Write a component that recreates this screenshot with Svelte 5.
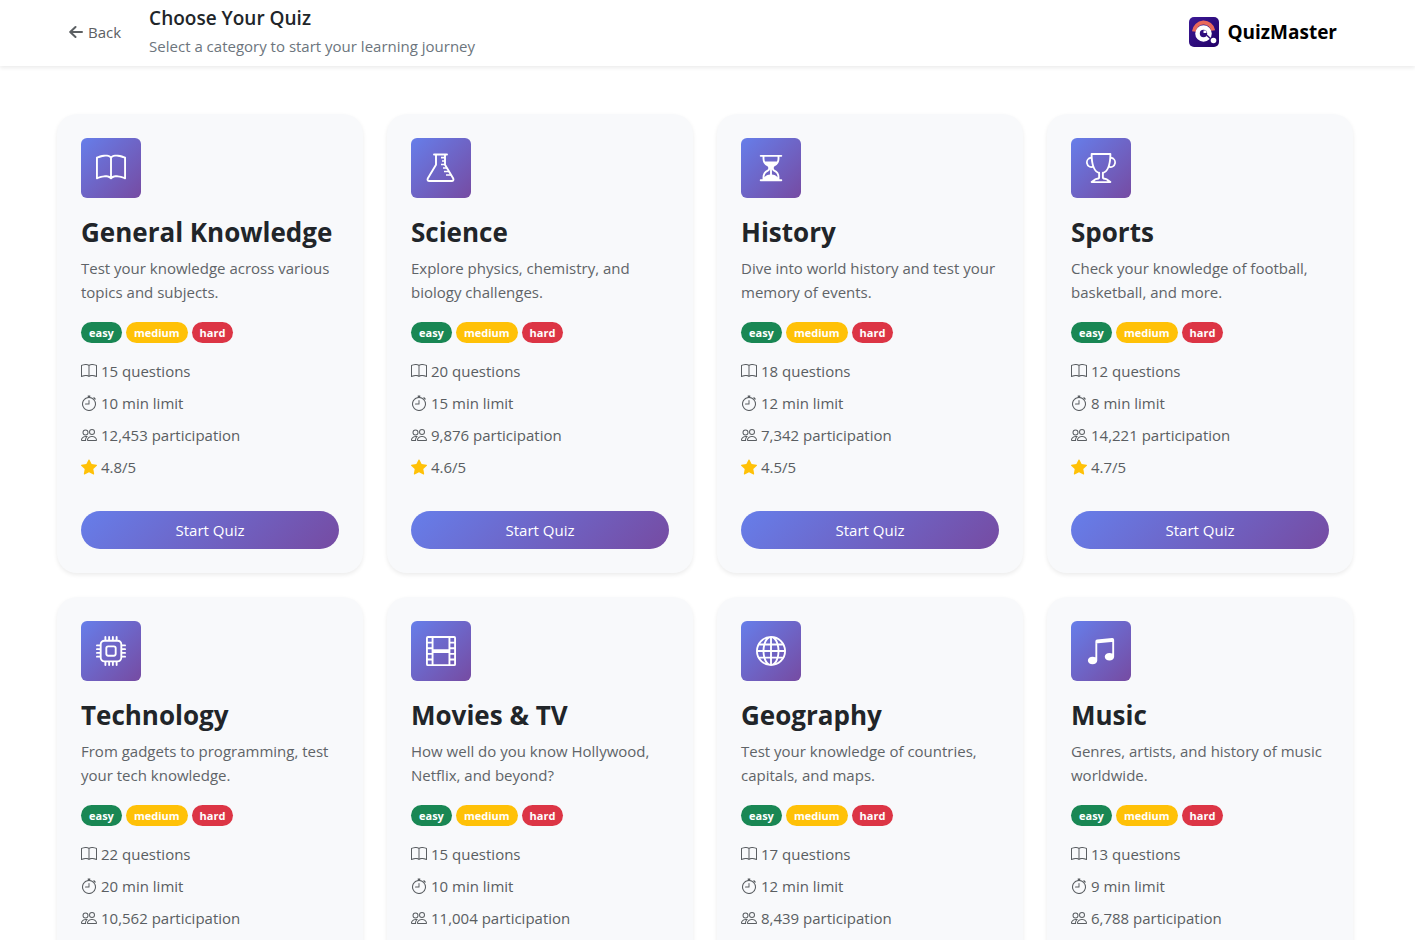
<script>
  const paths = {
    book: 'M1 2.828c.885-.37 2.154-.769 3.388-.893 1.33-.134 2.458.063 3.112.752v9.746c-.935-.53-2.12-.603-3.213-.493-1.18.12-2.37.461-3.287.811zm7.5-.141c.654-.689 1.782-.886 3.112-.752 1.234.124 2.503.523 3.388.893v9.923c-.918-.35-2.107-.692-3.287-.81-1.094-.111-2.278-.039-3.213.492zM8 1.783C7.015.936 5.587.81 4.287.94c-1.514.153-3.042.672-3.994 1.105A.5.5 0 0 0 0 2.5v11a.5.5 0 0 0 .707.455c.882-.4 2.303-.881 3.68-1.02 1.409-.142 2.59.087 3.223.877a.5.5 0 0 0 .78 0c.633-.79 1.814-1.019 3.222-.877 1.378.139 2.8.62 3.681 1.02A.5.5 0 0 0 16 13.5v-11a.5.5 0 0 0-.293-.455c-.952-.433-2.48-.952-3.994-1.105C10.413.809 8.985.936 8 1.783',
    stopwatch: 'M8.5 5.6a.5.5 0 1 0-1 0v2.9h-3a.5.5 0 0 0 0 1H8a.5.5 0 0 0 .5-.5z M6.5 1A.5.5 0 0 1 7 .5h2a.5.5 0 0 1 0 1v.57c1.36.196 2.594.78 3.584 1.64l.012-.013.354-.354-.354-.353a.5.5 0 0 1 .707-.708l1.414 1.415a.5.5 0 1 1-.707.707l-.353-.354-.354.354-.013.012A7 7 0 1 1 7 2.071V1.5a.5.5 0 0 1-.5-.5M8 3a6 6 0 1 0 .001 12A6 6 0 0 0 8 3',
    people: 'M15 14s1 0 1-1-1-4-5-4-5 3-5 4 1 1 1 1zm-7.978-1L7 12.996c.001-.264.167-1.03.76-1.72C8.312 10.629 9.282 10 11 10c1.717 0 2.687.63 3.24 1.276.593.69.758 1.457.76 1.72l-.008.002-.014.002zM11 7a2 2 0 1 0 0-4 2 2 0 0 0 0 4m3-2a3 3 0 1 1-6 0 3 3 0 0 1 6 0M6.936 9.28a6 6 0 0 0-1.23-.247A7 7 0 0 0 5 9c-4 0-5 3-5 4q0 1 1 1h4.216A2.24 2.24 0 0 1 5 13c0-1.01.377-2.042 1.09-2.904.243-.294.526-.569.846-.816M4.92 10A5.5 5.5 0 0 0 4 13H1c0-.26.164-1.03.76-1.724.545-.636 1.492-1.256 3.16-1.275ZM1.5 5.5a3 3 0 1 1 6 0 3 3 0 0 1-6 0m3-2a2 2 0 1 0 0 4 2 2 0 0 0 0-4',
    star: 'M3.612 15.443c-.386.198-.824-.149-.746-.592l.83-4.73L.173 6.765c-.329-.314-.158-.888.283-.95l4.898-.696L7.538.792c.197-.39.73-.39.927 0l2.184 4.327 4.898.696c.441.062.612.636.282.95l-3.522 3.356.83 4.73c.078.443-.36.79-.746.592L8 13.187l-4.389 2.256z',
    hourglass: 'M2.5 15a.5.5 0 1 1 0-1h1v-1a4.5 4.5 0 0 1 2.557-4.06c.29-.139.443-.377.443-.59v-.7c0-.213-.154-.451-.443-.59A4.5 4.5 0 0 1 3.5 3V2h-1a.5.5 0 0 1 0-1h11a.5.5 0 0 1 0 1h-1v1a4.5 4.5 0 0 1-2.557 4.06c-.29.139-.443.377-.443.59v.7c0 .213.154.451.443.59A4.5 4.5 0 0 1 12.5 13v1h1a.5.5 0 0 1 0 1zm2-13v1c0 .537.12 1.045.337 1.5h6.326c.216-.455.337-.963.337-1.5V2zm3 6.35c0 .701-.478 1.236-1.011 1.492A3.5 3.5 0 0 0 4.5 13s.866-1.299 3-1.48zm1 0v3.17c2.134.181 3 1.48 3 1.48a3.5 3.5 0 0 0-1.989-3.158C8.978 9.586 8.5 9.052 8.5 8.351z',
    trophy: 'M2.5.5A.5.5 0 0 1 3 0h10a.5.5 0 0 1 .5.5q0 .807-.034 1.536a3 3 0 1 1-1.133 5.89c-.79 1.865-1.878 2.777-2.833 3.011v2.173l1.425.356c.194.048.377.135.537.255L13.3 15.1a.5.5 0 0 1-.3.9H3a.5.5 0 0 1-.3-.9l1.838-1.379c.16-.12.343-.207.537-.255L6.5 13.11v-2.173c-.955-.234-2.043-1.146-2.833-3.012a3 3 0 1 1-1.132-5.89A33 33 0 0 1 2.5.5m.099 2.54a2 2 0 0 0 .72 3.935c-.333-1.05-.588-2.346-.72-3.935m10.083 3.935a2 2 0 0 0 .72-3.935c-.133 1.59-.388 2.885-.72 3.935M3.504 1q.01.775.056 1.469c.13 2.028.457 3.546.87 4.667C5.294 9.48 6.484 10 7 10a.5.5 0 0 1 .5.5v2.61a1 1 0 0 1-.757.97l-1.426.356a.5.5 0 0 0-.179.085L4.5 15h7l-.638-.479a.5.5 0 0 0-.18-.085l-1.425-.356a1 1 0 0 1-.757-.97V10.5A.5.5 0 0 1 9 10c.516 0 1.706-.52 2.57-2.864.413-1.12.74-2.64.87-4.667q.045-.694.056-1.469z',
    cpu: 'M5 0a.5.5 0 0 1 .5.5V2h1V.5a.5.5 0 0 1 1 0V2h1V.5a.5.5 0 0 1 1 0V2h1V.5a.5.5 0 0 1 1 0V2A2.5 2.5 0 0 1 14 4.5h1.5a.5.5 0 0 1 0 1H14v1h1.5a.5.5 0 0 1 0 1H14v1h1.5a.5.5 0 0 1 0 1H14v1h1.5a.5.5 0 0 1 0 1H14a2.5 2.5 0 0 1-2.5 2.5v1.5a.5.5 0 0 1-1 0V14h-1v1.5a.5.5 0 0 1-1 0V14h-1v1.5a.5.5 0 0 1-1 0V14h-1v1.5a.5.5 0 0 1-1 0V14A2.5 2.5 0 0 1 2 11.5H.5a.5.5 0 0 1 0-1H2v-1H.5a.5.5 0 0 1 0-1H2v-1H.5a.5.5 0 0 1 0-1H2v-1H.5a.5.5 0 0 1 0-1H2A2.5 2.5 0 0 1 4.5 2V.5A.5.5 0 0 1 5 0m-.5 3A1.5 1.5 0 0 0 3 4.5v7A1.5 1.5 0 0 0 4.5 13h7a1.5 1.5 0 0 0 1.5-1.5v-7A1.5 1.5 0 0 0 11.5 3zM5 6.5A1.5 1.5 0 0 1 6.5 5h3A1.5 1.5 0 0 1 11 6.5v3A1.5 1.5 0 0 1 9.5 11h-3A1.5 1.5 0 0 1 5 9.5zM6.5 6a.5.5 0 0 0-.5.5v3a.5.5 0 0 0 .5.5h3a.5.5 0 0 0 .5-.5v-3a.5.5 0 0 0-.5-.5z',
    film: 'M0 1a1 1 0 0 1 1-1h14a1 1 0 0 1 1 1v14a1 1 0 0 1-1 1H1a1 1 0 0 1-1-1zm4 0v6h8V1zm8 8H4v6h8zM1 1v2h2V1zm2 3H1v2h2zM1 7v2h2V7zm2 3H1v2h2zm-2 3v2h2v-2zM15 1h-2v2h2zm-2 3v2h2V4zm2 3h-2v2h2zm-2 3v2h2v-2zm2 3h-2v2h2z',
    globe: 'M0 8a8 8 0 1 1 16 0A8 8 0 0 1 0 8m7.5-6.923c-.67.204-1.335.82-1.887 1.855A8 8 0 0 0 5.145 4H7.5zM4.09 4a9.3 9.3 0 0 1 .64-1.539 7 7 0 0 1 .597-.933A7.03 7.03 0 0 0 2.255 4zm-.582 3.5c.03-.877.138-1.718.312-2.5H1.674a7 7 0 0 0-.656 2.5zM4.847 5a12.5 12.5 0 0 0-.338 2.5H7.5V5zM8.5 5v2.5h2.99a12.5 12.5 0 0 0-.337-2.5zM4.51 8.5a12.5 12.5 0 0 0 .337 2.5H7.5V8.5zm3.99 0V11h2.653c.187-.765.306-1.608.338-2.5zM5.145 12q.208.58.468 1.068c.552 1.035 1.218 1.65 1.887 1.855V12zm.182 2.472a7 7 0 0 1-.597-.933A9.3 9.3 0 0 1 4.09 12H2.255a7 7 0 0 0 3.072 2.472M3.82 11a13.7 13.7 0 0 1-.312-2.5h-2.49c.062.89.291 1.733.656 2.5zm6.853 3.472A7 7 0 0 0 13.745 12H11.91a9.3 9.3 0 0 1-.64 1.539 7 7 0 0 1-.597.933M8.5 12v2.923c.67-.204 1.335-.82 1.887-1.855q.26-.487.468-1.068zm3.68-1h2.146c.365-.767.594-1.61.656-2.5h-2.49a13.7 13.7 0 0 1-.312 2.5m2.802-3.5a7 7 0 0 0-.656-2.5H12.18c.174.782.282 1.623.312 2.5zM11.27 2.461c.247.464.462.98.64 1.539h1.835a7 7 0 0 0-3.072-2.472c.218.284.418.598.597.933M10.855 4a8 8 0 0 0-.468-1.068C9.835 1.897 9.17 1.282 8.5 1.077V4z',
    music: 'M6 13c0 1.105-1.12 2-2.5 2S1 14.105 1 13s1.12-2 2.5-2 2.5.896 2.5 2m9-2c0 1.105-1.12 2-2.5 2s-2.5-.895-2.5-2 1.12-2 2.5-2 2.5.895 2.5 2 M14 11V2h1v9zM6 3v10H5V3z M5 2.905a1 1 0 0 1 .9-.995l8-.8a1 1 0 0 1 1.1.995V3L5 4z'
  };

  const levels = ['easy', 'medium', 'hard'];

  const quizzes = [
    { icon: 'book', title: 'General Knowledge', text: 'Test your knowledge across various topics and subjects.', questions: 15, minutes: 10, people: '12,453', rating: '4.8' },
    { icon: 'flask', title: 'Science', text: 'Explore physics, chemistry, and biology challenges.', questions: 20, minutes: 15, people: '9,876', rating: '4.6' },
    { icon: 'hourglass', title: 'History', text: 'Dive into world history and test your memory of events.', questions: 18, minutes: 12, people: '7,342', rating: '4.5' },
    { icon: 'trophy', title: 'Sports', text: 'Check your knowledge of football, basketball, and more.', questions: 12, minutes: 8, people: '14,221', rating: '4.7' },
    { icon: 'cpu', title: 'Technology', text: 'From gadgets to programming, test your tech knowledge.', questions: 22, minutes: 20, people: '10,562' },
    { icon: 'film', title: 'Movies & TV', text: 'How well do you know Hollywood, Netflix, and beyond?', questions: 15, minutes: 10, people: '11,004' },
    { icon: 'globe', title: 'Geography', text: 'Test your knowledge of countries, capitals, and maps.', questions: 17, minutes: 12, people: '8,439' },
    { icon: 'music', title: 'Music', text: 'Genres, artists, and history of music worldwide.', questions: 13, minutes: 9, people: '6,788' }
  ];
</script>

{#snippet icon(name)}
  {#if name === 'flask'}
    <svg class="icon" viewBox="0 0 30 30" fill="none" stroke="currentColor" stroke-width="1.9" stroke-linecap="round" stroke-linejoin="round" aria-hidden="true">
      <path d="M8 1.5h13M10 1.5v10.200L1.900 25.200q-1.200 2.600 1.600 2.800h22q2.800-.200 1.600-2.800L19 11.700V1.500" />
      <path stroke-width="1.700" stroke-linecap="butt" d="M15 4.700h4M16 8h3M15 11.500h4M17 15h4M18 18.500h5M20 22h5" />
    </svg>
  {:else}
    <svg class="icon" viewBox="0 0 16 16" fill="currentColor" aria-hidden="true"><path d={paths[name]} /></svg>
  {/if}
{/snippet}

<header>
  <div class="left">
    <a class="back" href="#home">
      <svg viewBox="0 0 14 14" fill="none" stroke="currentColor" stroke-width="2" stroke-linecap="round" stroke-linejoin="round" aria-hidden="true"><path d="M13 7H1.500M6.500 2L1.200 7l5.300 5" /></svg>
      Back
    </a>
    <div>
      <h1>Choose Your Quiz</h1>
      <p>Select a category to start your learning journey</p>
    </div>
  </div>
  <a class="brand" href="#home">
    <svg viewBox="0 0 30 30" aria-hidden="true">
      <defs>
        <linearGradient id="logo-bg" x1="0" y1="0" x2="1" y2="1">
          <stop offset="0" stop-color="#3c1a96" />
          <stop offset="1" stop-color="#220066" />
        </linearGradient>
      </defs>
      <rect width="30" height="30" rx="5" fill="url(#logo-bg)" />
      <path d="M5 14.500a9.700 9.700 0 0 1 19.200-1" fill="none" stroke="#e9685a" stroke-width="4" />
      <circle cx="14.500" cy="16.500" r="6" fill="none" stroke="#fff" stroke-width="4.600" />
      <path d="M14.500 13.500h3v2.500h-3z" fill="#fff" />
      <path d="M17.500 18l5 4.500" stroke="#35107a" stroke-width="1.500" />
      <circle cx="24.500" cy="23.500" r="2.800" fill="#fff" />
    </svg>
    QuizMaster
  </a>
</header>

<main>
  {#each quizzes as quiz}
    <article>
      <div class="tile">{@render icon(quiz.icon)}</div>
      <h2>{quiz.title}</h2>
      <p>{quiz.text}</p>
      <div class="levels">
        {#each levels as level}<span class={level}>{level}</span>{/each}
      </div>
      <ul>
        <li>{@render icon('book')}{quiz.questions} questions</li>
        <li>{@render icon('stopwatch')}{quiz.minutes} min limit</li>
        <li>{@render icon('people')}{quiz.people} participation</li>
        {#if quiz.rating}<li class="rating">{@render icon('star')}{quiz.rating}/5</li>{/if}
      </ul>
      <button type="button">Start Quiz</button>
    </article>
  {/each}
</main>

<style>
  :global(body) {
    margin: 0;
    background: #fff;
    color: #212529;
    font: 15px/24px "Segoe UI", "Open Sans", "Noto Sans", sans-serif;
  }
  h1, h2, p, ul { margin: 0; padding: 0; }
  header {
    display: flex;
    align-items: center;
    justify-content: space-between;
    box-sizing: border-box;
    height: 66px;
    padding: 0 78px 2px 69px;
    box-shadow: 0 2px 4px rgba(0, 0, 0, 0.08);
  }
  .left { display: flex; align-items: center; gap: 28px; }
  a { color: inherit; text-decoration: none; }
  .back { display: flex; align-items: center; gap: 5px; color: #5c6063; }
  .back svg { width: 14px; height: 14px; }
  h1 { font-size: 19px; font-weight: 600; line-height: 24px; margin-bottom: 4px; }
  header p { color: #6c757d; }
  .brand { display: flex; align-items: center; gap: 8px; color: #000; font-size: 19px; font-weight: 700; }
  .brand svg { width: 30px; height: 30px; }
  main {
    display: grid;
    grid-template-columns: repeat(4, minmax(0, 1fr));
    gap: 24px;
    padding: 48px 62px 48px 57px;
  }
  article {
    display: flex;
    flex-direction: column;
    padding: 24px;
    border-radius: 20px;
    background: #f8f9fb;
    box-shadow: 0 2px 4px rgba(0, 0, 0, 0.08);
  }
  .tile {
    display: grid;
    place-items: center;
    width: 60px;
    height: 60px;
    border-radius: 6px;
    margin-bottom: 17px;
    color: #fff;
    background: linear-gradient(135deg, #667eea, #764ba2);
  }
  .tile .icon { width: 30px; height: 30px; }
  h2 { font-size: 26px; font-weight: 700; line-height: 34px; margin-bottom: 7px; white-space: nowrap; }
  article p { color: #5f6468; margin-bottom: 16px; }
  .levels { display: flex; align-items: center; gap: 4px; height: 24px; margin-bottom: 15px; }
  .levels span {
    padding: 0 8px;
    border-radius: 11px;
    color: #fff;
    font-size: 11px;
    font-weight: 700;
    line-height: 21px;
  }
  .levels .easy { background: #198754; }
  .levels .medium { background: #ffc107; }
  .levels .hard { background: #dc3545; }
  ul { display: grid; gap: 8px; margin-bottom: 32px; list-style: none; color: #5a5e62; }
  li { display: flex; align-items: center; gap: 4px; }
  li .icon { width: 16px; height: 16px; }
  .rating .icon { color: #ffc107; }
  button {
    height: 38px;
    border: 0;
    border-radius: 19px;
    color: #fff;
    font: inherit;
    background: linear-gradient(135deg, #667eea, #764ba2);
    cursor: pointer;
  }
</style>
